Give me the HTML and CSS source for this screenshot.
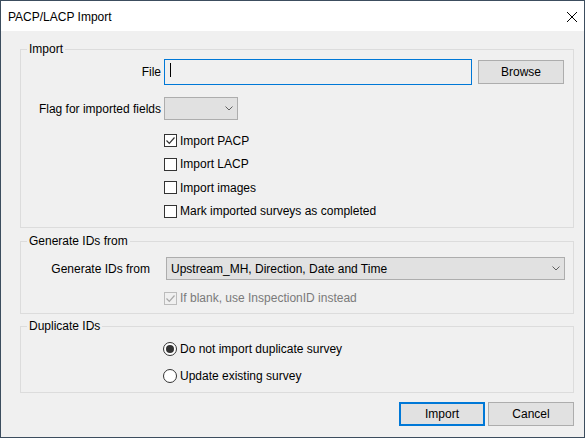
FILE: index.html
```html
<!DOCTYPE html>
<html>
<head>
<meta charset="utf-8">
<link rel="stylesheet" href="styles.css">
</head>
<body>
<div class="window">
  <div class="titlebar">
    <span class="title">PACP/LACP Import</span>
    <svg class="close" width="12" height="12" viewBox="0 0 12 12"><path d="M1 1 L11 11 M11 1 L1 11" stroke="#000" stroke-width="1" fill="none"/></svg>
  </div>
  <div class="content">
    <div class="group g-import">
      <div class="legend">Import</div>
      <div class="row file-row">
        <div class="lbl">File</div>
        <div class="textbox"><span class="caret"></span></div>
        <div class="btn browse">Browse</div>
      </div>
      <div class="row flag-row">
        <div class="lbl">Flag for imported fields</div>
        <div class="combo flag-combo">
          <svg class="chev" width="8" height="5" viewBox="0 0 8 5"><path d="M0.5 0.5 L4 4 L7.5 0.5" stroke="#606060" stroke-width="1" fill="none"/></svg>
        </div>
      </div>
      <div class="checks">
        <div class="check"><span class="box"><svg width="11" height="11" viewBox="0 0 11 11"><path d="M1.5 5.5 L4.3 8.3 L9.5 2.5" stroke="#333" stroke-width="1.2" fill="none"/></svg></span>Import PACP</div>
        <div class="check"><span class="box"></span>Import LACP</div>
        <div class="check"><span class="box"></span>Import images</div>
        <div class="check"><span class="box"></span>Mark imported surveys as completed</div>
      </div>
    </div>

    <div class="group g-generate">
      <div class="legend">Generate IDs from</div>
      <div class="row gen-row">
        <div class="lbl gen-lbl">Generate IDs from</div>
        <div class="combo gen-combo">
          <span class="combo-text">Upstream_MH, Direction, Date and Time</span>
          <svg class="chev" width="8" height="5" viewBox="0 0 8 5"><path d="M0.5 0.5 L4 4 L7.5 0.5" stroke="#606060" stroke-width="1" fill="none"/></svg>
        </div>
      </div>
      <div class="check disabled gen-check"><span class="box"><svg width="11" height="11" viewBox="0 0 11 11"><path d="M1.5 5.5 L4.3 8.3 L9.5 2.5" stroke="#a8a8a8" stroke-width="1.2" fill="none"/></svg></span>If blank, use InspectionID instead</div>
    </div>

    <div class="group g-dup">
      <div class="legend">Duplicate IDs</div>
      <div class="radios">
        <div class="radio"><span class="circle on"></span>Do not import duplicate survey</div>
        <div class="radio"><span class="circle"></span>Update existing survey</div>
      </div>
    </div>

    <div class="buttons">
      <div class="btn default">Import</div>
      <div class="btn">Cancel</div>
    </div>
  </div>
</div>
</body>
</html>
```

FILE: styles.css
```css
* { box-sizing: border-box; }
html, body { margin: 0; padding: 0; }
body {
  font-family: "Liberation Sans", Arial, sans-serif;
  font-size: 12px;
  color: #000;
  background: #f0f0f0;
}
.window {
  width: 585px;
  height: 438px;
  border: 1px solid #3c4d5e;
  background: #f0f0f0;
  display: flex;
  flex-direction: column;
}
.titlebar {
  height: 30px;
  background: #fff;
  display: flex;
  align-items: center;
  justify-content: space-between;
  padding: 1px 8px 0 7px;
}
.title { font-size: 12px; }
.close { margin-right: -2px; }
.content {
  display: flex;
  flex-direction: column;
  padding: 0 10px 0 19px;
}
.group {
  position: relative;
  border: 1px solid #dcdcdc;
}
.legend {
  position: absolute;
  top: -9px;
  left: 6px;
  padding: 0 2px;
  line-height: 16px;
  background: #f0f0f0;
}
.g-import { margin-top: 18px; height: 179px; padding-top: 9px; }
.g-generate { margin-top: 13px; height: 73px; padding-top: 15px; }
.g-dup { margin-top: 12px; height: 67px; padding-top: 8.5px; }

.row { display: flex; align-items: center; }
.lbl { width: 140px; text-align: right; margin-right: 3px; }
.file-row { height: 26px; }
.textbox {
  width: 308px;
  height: 26px;
  border: 1px solid #0078d7;
  background: #f0f0f0;
  padding: 3px 0 0 5px;
}
.caret { display: block; width: 1px; height: 14px; background: #000; }
.btn {
  width: 86px;
  height: 24px;
  background: #e1e1e1;
  border: 1px solid #adadad;
  display: flex;
  align-items: center;
  justify-content: center;
}
.browse { margin-left: 6px; }
.flag-row { margin-top: 12px; height: 23px; }
.combo {
  height: 23px;
  background: #e1e1e1;
  border: 1px solid #adadad;
  display: flex;
  align-items: center;
  justify-content: space-between;
  padding: 0 4px 0 4px;
}
.flag-combo { width: 74px; justify-content: flex-end; }
.chev { display: block; }
.checks { margin-top: 8.75px; }
.check {
  height: 23.5px;
  display: flex;
  align-items: center;
  padding-left: 143px;
}
.box {
  width: 13px;
  height: 13px;
  border: 1px solid #333;
  background: #fff;
  margin-right: 3px;
  display: flex;
  align-items: center;
  justify-content: center;
}
.box svg { display: block; }
.disabled { color: #7a7a7a; }
.disabled .box { border-color: #bcbcbc; background: #f0f0f0; }
.gen-row { height: 23px; }
.gen-lbl { width: 129px; margin-right: 16px; }
.gen-combo { width: 399px; }
.combo-text { padding-left: 0; }
.gen-check { margin-top: 6.25px; }
.radio {
  height: 27px;
  display: flex;
  align-items: center;
  padding-left: 142px;
}
.circle {
  width: 14px;
  height: 14px;
  border: 1px solid #333;
  border-radius: 50%;
  background: #fff;
  margin-right: 3px;
  display: flex;
  align-items: center;
  justify-content: center;
}
.circle.on::after {
  content: "";
  width: 8px;
  height: 8px;
  border-radius: 50%;
  background: #333;
}
.buttons {
  margin-top: 9px;
  display: flex;
  justify-content: flex-end;
  gap: 3px;
}
.btn.default { border: 2px solid #0078d7; }
```
